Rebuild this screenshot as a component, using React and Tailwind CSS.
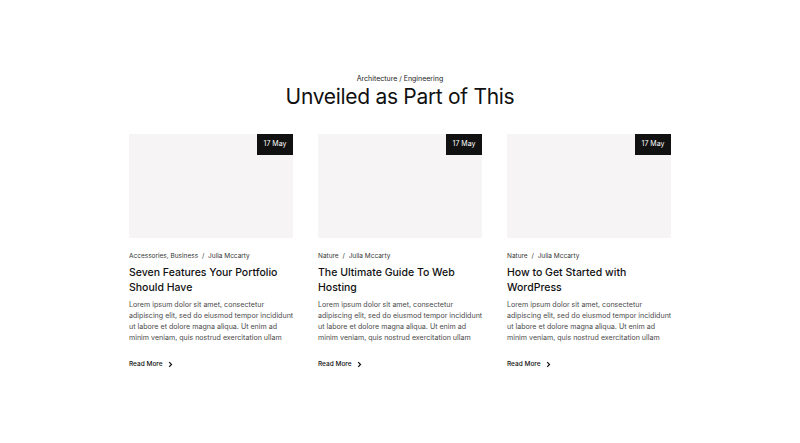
import React from "react";

const posts = [
  { meta: "Accessories, Business", title: "Seven Features Your Portfolio Should Have" },
  { meta: "Nature", title: "The Ultimate Guide To Web Hosting" },
  { meta: "Nature", title: "How to Get Started with WordPress" },
];

const lines = [
  "Lorem ipsum dolor sit amet, consectetur",
  "adipiscing elit, sed do eiusmod tempor incididunt",
  "ut labore et dolore magna aliqua. Ut enim ad",
  "minim veniam, quis nostrud exercitation ullam",
];

function Chevron() {
  return (
    <svg width="5" height="7" viewBox="0 0 5 7" className="ml-[5px]">
      <path d="M1.2 1.2 L3.5 3.5 L1.2 5.8" fill="none" stroke="#111" strokeWidth="1.2" />
    </svg>
  );
}

export default function App() {
  return (
    <div className="w-[800px] h-[443px] bg-white" style={{ fontFamily: "Inter, 'Noto Sans', sans-serif" }}>
      <div className="pt-[74px] flex flex-col items-center">
        <div className="text-[7px] leading-[9px] text-[#222]">Architecture / Engineering</div>
        <h2 className="text-[21px] leading-[26px] text-[#111] mt-[1px] tracking-[-0.3px]">Unveiled as Part of This</h2>
      </div>
      <div className="mt-[24px] mx-auto w-[542px] grid grid-cols-3 gap-[25px]">
        {posts.map((p, i) => (
          <div key={i} className="flex flex-col">
            <div className="relative h-[104px] bg-[#f6f4f4]">
              <div className="absolute right-0 top-0 w-[36px] h-[21px] bg-[#111] text-white text-[7px] flex items-center justify-center">
                17 May
              </div>
            </div>
            <div className="mt-[14px] text-[6.5px] leading-[9px] text-[#333]">
              {p.meta} <span className="mx-[2px]">/</span> Julia Mccarty
            </div>
            <div className="mt-[4px] text-[10.5px] leading-[15px] font-medium text-[#111]">{p.title}</div>
            <div className="mt-[4px] text-[7.1px] leading-[11px] text-[#4a4a4a] whitespace-nowrap">
              {lines.map((l, j) => (
                <div key={j}>{l}</div>
              ))}
            </div>
            <div className="mt-[17px] flex items-center text-[6.5px] leading-[9px] font-medium text-[#111]">
              Read More <Chevron />
            </div>
          </div>
        ))}
      </div>
    </div>
  );
}
